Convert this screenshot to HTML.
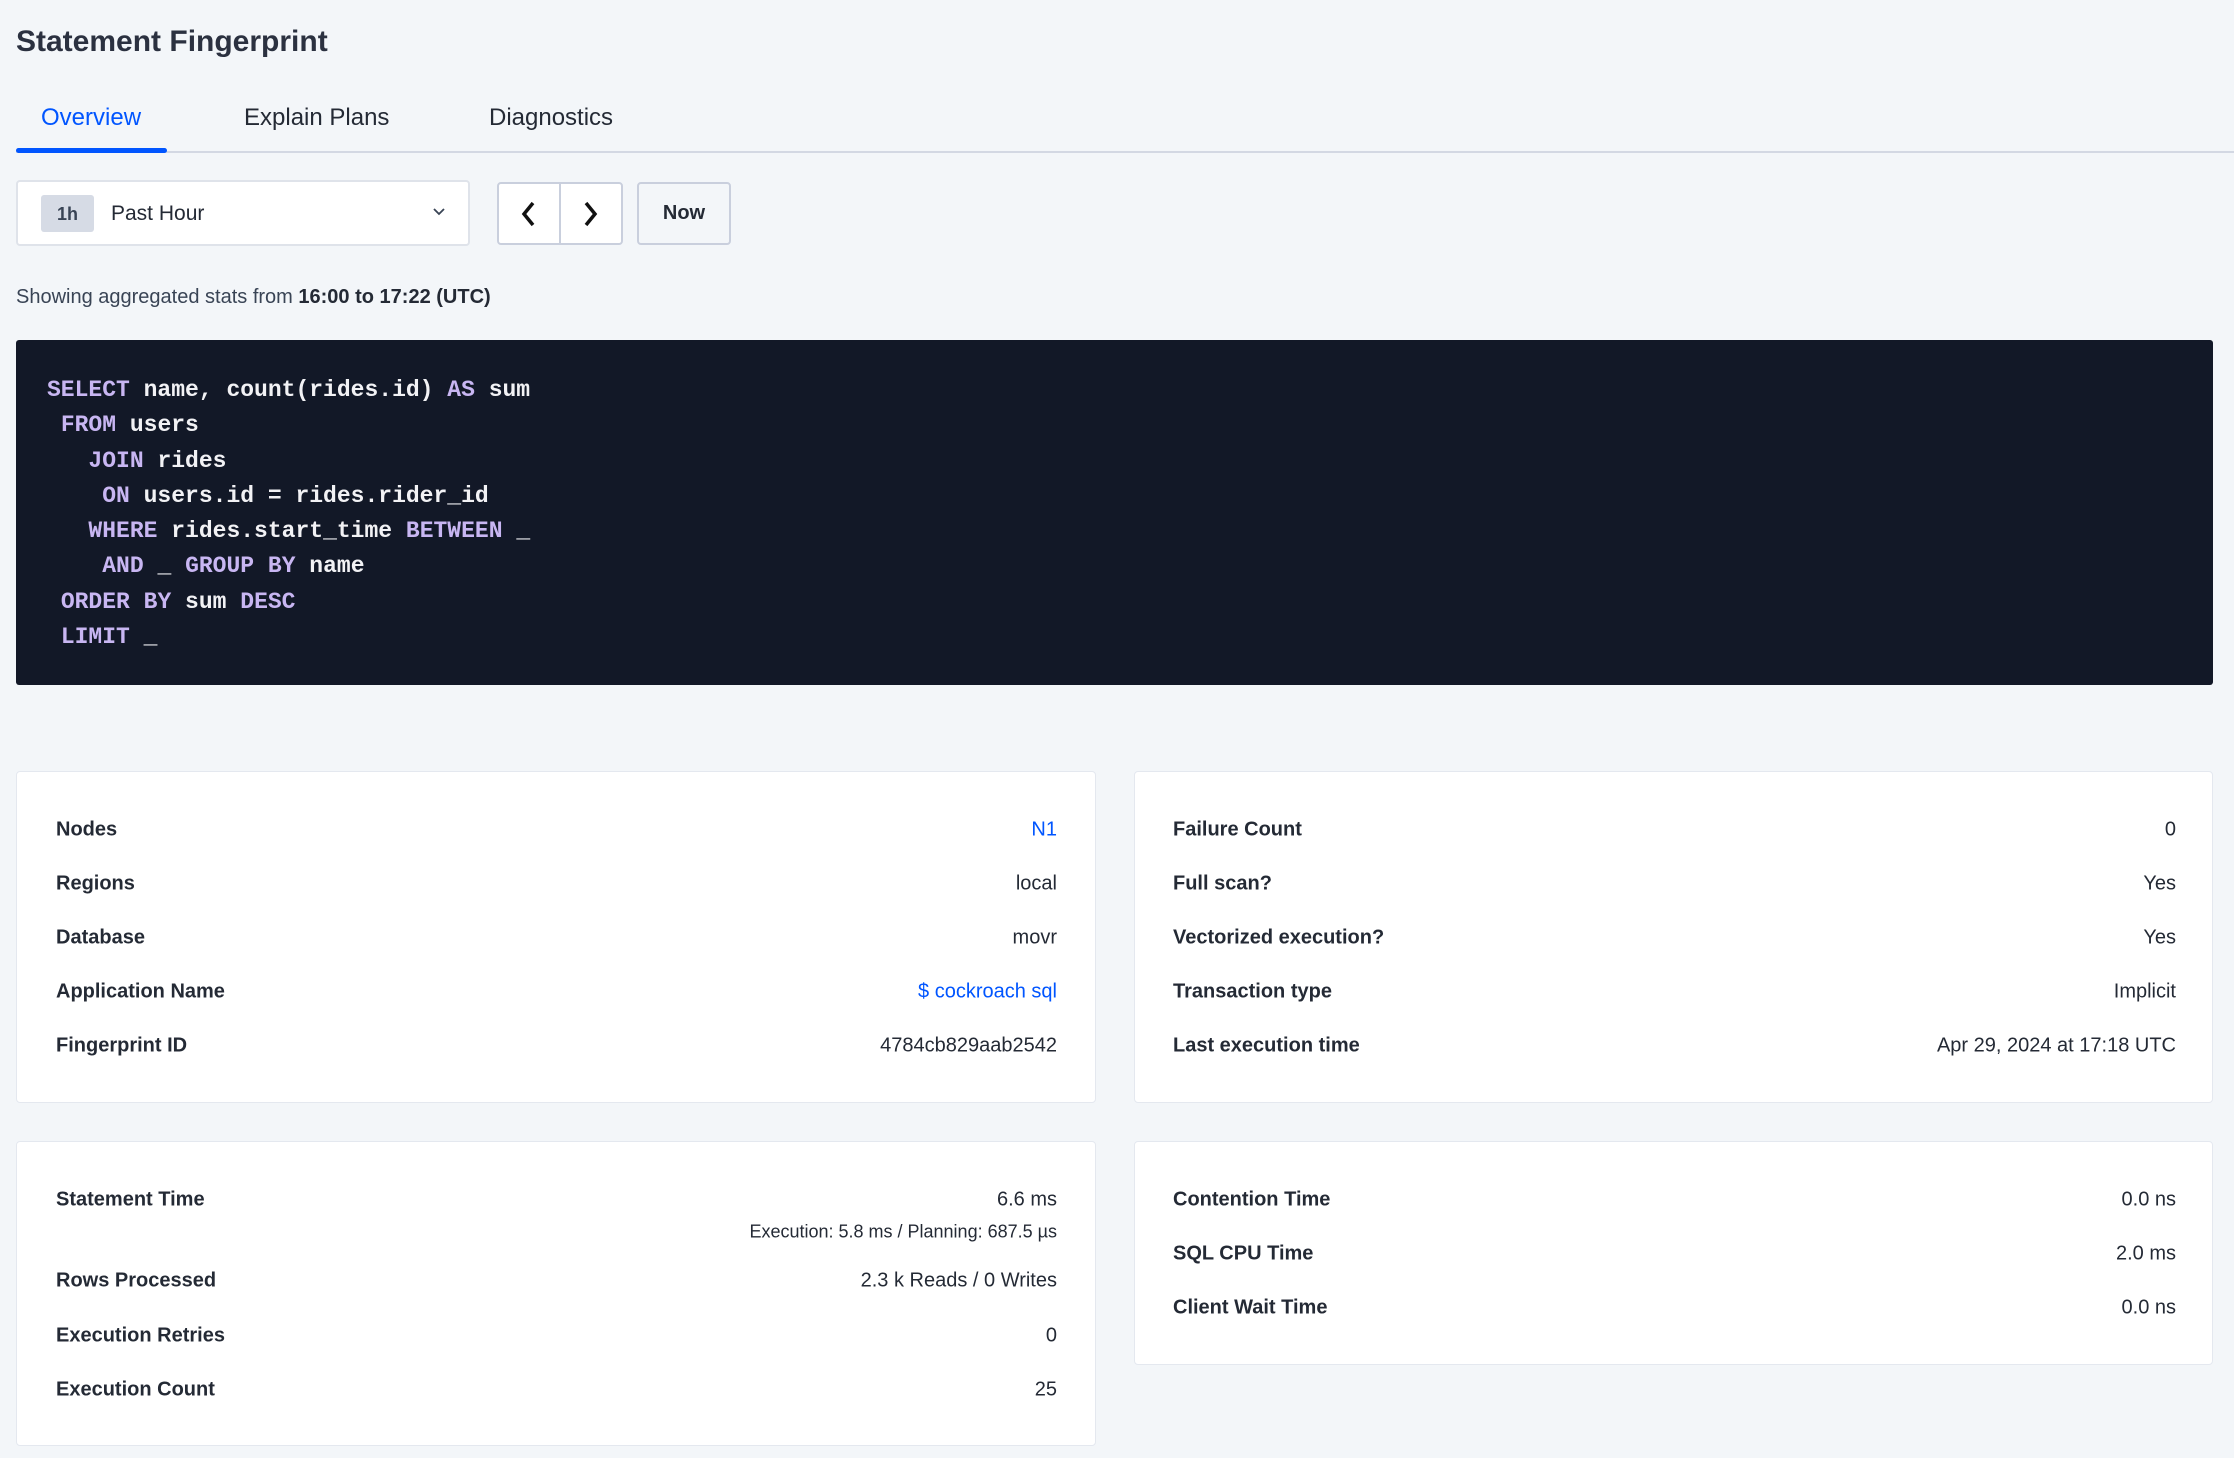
<!DOCTYPE html>
<html><head><meta charset="utf-8"><style>
*{margin:0;padding:0;box-sizing:border-box}
body{width:2234px;height:1458px;background:#f3f6f9;font-family:"Liberation Sans",sans-serif;color:#242a35;position:relative;overflow:hidden}
.a{position:absolute;white-space:nowrap}
.title{left:16px;top:25px;font-size:30px;font-weight:bold;color:#2b3140}
.tab{top:104px;font-size:24px;color:#242a35}
.card{position:absolute;background:#fff;border:1px solid #e4e8ef;border-radius:4px}
.lbl{position:absolute;font-size:20px;font-weight:bold;color:#242a35;transform:translateY(-50%);margin-top:2px}
.val{position:absolute;font-size:20px;color:#242a35;transform:translateY(-50%);text-align:right;margin-top:2px}
.blue{color:#0055ff}
pre{position:absolute;left:47px;top:373px;font-family:"Liberation Mono",monospace;font-weight:bold;font-size:23px;line-height:35.3px;color:#f2f2f5}
.k{color:#c8b6f2}
</style></head><body>
<div class="a title">Statement Fingerprint</div>
<div class="a tab" style="left:41px;color:#0055ff">Overview</div>
<div class="a tab" style="left:244px">Explain Plans</div>
<div class="a tab" style="left:489px">Diagnostics</div>
<div class="a" style="left:16px;top:151px;width:2218px;height:2px;background:#d3d8e3"></div>
<div class="a" style="left:16px;top:148px;width:151px;height:5px;background:#0055ff;border-radius:3px"></div>

<div class="a" style="left:16px;top:180px;width:454px;height:66px;background:#fff;border:2px solid #dfe3ea;border-radius:4px"></div>
<div class="a" style="left:41px;top:195px;width:53px;height:37px;background:#d6dbe5;border-radius:3px;font-size:18px;font-weight:bold;text-align:center;line-height:39px;color:#394455">1h</div>
<div class="a" style="left:111px;top:202px;font-size:21px">Past Hour</div>
<svg class="a" style="left:432px;top:206px" width="14" height="12" viewBox="0 0 14 12"><path d="M2 3l5 5 5-5" fill="none" stroke="#394455" stroke-width="1.8"/></svg>

<div class="a" style="left:497px;top:182px;width:126px;height:63px;background:#fff;border:2px solid #c9cfdd;border-radius:4px"></div>
<div class="a" style="left:559px;top:183px;width:2px;height:61px;background:#c9cfdd"></div>
<svg class="a" style="left:517px;top:199px" width="24" height="30" viewBox="0 0 24 30"><path d="M16 4L7 15l9 11" fill="none" stroke="#111" stroke-width="3.5"/></svg>
<svg class="a" style="left:578px;top:199px" width="24" height="30" viewBox="0 0 24 30"><path d="M8 4l9 11-9 11" fill="none" stroke="#111" stroke-width="3.5"/></svg>
<div class="a" style="left:637px;top:182px;width:94px;height:63px;background:#f3f6f9;border:2px solid #c9cfdd;border-radius:4px;font-size:20px;font-weight:bold;text-align:center;line-height:59px">Now</div>

<div class="a" style="left:16px;top:286px;font-size:20px;color:#394455">Showing aggregated stats from <b style="color:#242a35">16:00 to 17:22 (UTC)</b></div>

<div class="a" style="left:16px;top:340px;width:2197px;height:345px;background:#121827;border-radius:3px"></div>
<pre><span class="k">SELECT</span> name, count(rides.id) <span class="k">AS</span> sum
 <span class="k">FROM</span> users
   <span class="k">JOIN</span> rides
    <span class="k">ON</span> users.id = rides.rider_id
   <span class="k">WHERE</span> rides.start_time <span class="k">BETWEEN</span> _
    <span class="k">AND</span> _ <span class="k">GROUP</span> <span class="k">BY</span> name
 <span class="k">ORDER</span> <span class="k">BY</span> sum <span class="k">DESC</span>
 <span class="k">LIMIT</span> _</pre>

<div class="card" style="left:16px;top:771px;width:1080px;height:332px"></div>
<div class="card" style="left:1134px;top:771px;width:1079px;height:332px"></div>
<div class="card" style="left:16px;top:1141px;width:1080px;height:305px"></div>
<div class="card" style="left:1134px;top:1141px;width:1079px;height:224px"></div>

<div class="lbl" style="left:56px;top:828px">Nodes</div><div class="val blue" style="right:1177px;top:828px">N1</div>
<div class="lbl" style="left:56px;top:882px">Regions</div><div class="val" style="right:1177px;top:882px">local</div>
<div class="lbl" style="left:56px;top:936px">Database</div><div class="val" style="right:1177px;top:936px">movr</div>
<div class="lbl" style="left:56px;top:990px">Application Name</div><div class="val blue" style="right:1177px;top:990px">$ cockroach sql</div>
<div class="lbl" style="left:56px;top:1044px">Fingerprint ID</div><div class="val" style="right:1177px;top:1044px">4784cb829aab2542</div>

<div class="lbl" style="left:1173px;top:828px">Failure Count</div><div class="val" style="right:58px;top:828px">0</div>
<div class="lbl" style="left:1173px;top:882px">Full scan?</div><div class="val" style="right:58px;top:882px">Yes</div>
<div class="lbl" style="left:1173px;top:936px">Vectorized execution?</div><div class="val" style="right:58px;top:936px">Yes</div>
<div class="lbl" style="left:1173px;top:990px">Transaction type</div><div class="val" style="right:58px;top:990px">Implicit</div>
<div class="lbl" style="left:1173px;top:1044px">Last execution time</div><div class="val" style="right:58px;top:1044px">Apr 29, 2024 at 17:18 UTC</div>

<div class="lbl" style="left:56px;top:1198px">Statement Time</div><div class="val" style="right:1177px;top:1198px">6.6 ms</div>
<div class="val" style="right:1177px;top:1230px;font-size:18px">Execution: 5.8 ms / Planning: 687.5 µs</div>
<div class="lbl" style="left:56px;top:1279px">Rows Processed</div><div class="val" style="right:1177px;top:1279px">2.3 k Reads / 0 Writes</div>
<div class="lbl" style="left:56px;top:1334px">Execution Retries</div><div class="val" style="right:1177px;top:1334px">0</div>
<div class="lbl" style="left:56px;top:1388px">Execution Count</div><div class="val" style="right:1177px;top:1388px">25</div>

<div class="lbl" style="left:1173px;top:1198px">Contention Time</div><div class="val" style="right:58px;top:1198px">0.0 ns</div>
<div class="lbl" style="left:1173px;top:1252px">SQL CPU Time</div><div class="val" style="right:58px;top:1252px">2.0 ms</div>
<div class="lbl" style="left:1173px;top:1306px">Client Wait Time</div><div class="val" style="right:58px;top:1306px">0.0 ns</div>
</body></html>
